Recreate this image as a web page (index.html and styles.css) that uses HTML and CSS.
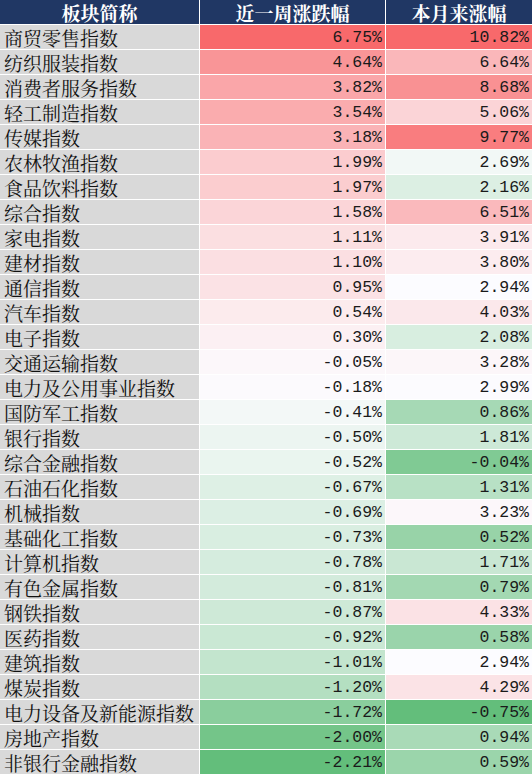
FILE: index.html
```html
<!DOCTYPE html>
<html lang="zh-CN">
<head>
  <meta charset="UTF-8" />
  <meta name="viewport" content="width=device-width, initial-scale=1.0"/>
  <title>板块涨跌幅</title>
  <link rel="stylesheet" href="styles.css">
</head>
<body>

  <div class="sheet">
    <div class="cell head">板块简称</div>
    <div class="cell head">近一周涨跌幅</div>
    <div class="cell head">本月来涨幅</div>

    <div class="cell name">商贸零售指数</div><div class="cell num week">6.75%</div><div class="cell num month">10.82%</div>
    <div class="cell name">纺织服装指数</div><div class="cell num week">4.64%</div><div class="cell num month">6.64%</div>
    <div class="cell name">消费者服务指数</div><div class="cell num week">3.82%</div><div class="cell num month">8.68%</div>
    <div class="cell name">轻工制造指数</div><div class="cell num week">3.54%</div><div class="cell num month">5.06%</div>
    <div class="cell name">传媒指数</div><div class="cell num week">3.18%</div><div class="cell num month">9.77%</div>
    <div class="cell name">农林牧渔指数</div><div class="cell num week">1.99%</div><div class="cell num month">2.69%</div>
    <div class="cell name">食品饮料指数</div><div class="cell num week">1.97%</div><div class="cell num month">2.16%</div>
    <div class="cell name">综合指数</div><div class="cell num week">1.58%</div><div class="cell num month">6.51%</div>
    <div class="cell name">家电指数</div><div class="cell num week">1.11%</div><div class="cell num month">3.91%</div>
    <div class="cell name">建材指数</div><div class="cell num week">1.10%</div><div class="cell num month">3.80%</div>
    <div class="cell name">通信指数</div><div class="cell num week">0.95%</div><div class="cell num month">2.94%</div>
    <div class="cell name">汽车指数</div><div class="cell num week">0.54%</div><div class="cell num month">4.03%</div>
    <div class="cell name">电子指数</div><div class="cell num week">0.30%</div><div class="cell num month">2.08%</div>
    <div class="cell name">交通运输指数</div><div class="cell num week">-0.05%</div><div class="cell num month">3.28%</div>
    <div class="cell name">电力及公用事业指数</div><div class="cell num week">-0.18%</div><div class="cell num month">2.99%</div>
    <div class="cell name">国防军工指数</div><div class="cell num week">-0.41%</div><div class="cell num month">0.86%</div>
    <div class="cell name">银行指数</div><div class="cell num week">-0.50%</div><div class="cell num month">1.81%</div>
    <div class="cell name">综合金融指数</div><div class="cell num week">-0.52%</div><div class="cell num month">-0.04%</div>
    <div class="cell name">石油石化指数</div><div class="cell num week">-0.67%</div><div class="cell num month">1.31%</div>
    <div class="cell name">机械指数</div><div class="cell num week">-0.69%</div><div class="cell num month">3.23%</div>
    <div class="cell name">基础化工指数</div><div class="cell num week">-0.73%</div><div class="cell num month">0.52%</div>
    <div class="cell name">计算机指数</div><div class="cell num week">-0.78%</div><div class="cell num month">1.71%</div>
    <div class="cell name">有色金属指数</div><div class="cell num week">-0.81%</div><div class="cell num month">0.79%</div>
    <div class="cell name">钢铁指数</div><div class="cell num week">-0.87%</div><div class="cell num month">4.33%</div>
    <div class="cell name">医药指数</div><div class="cell num week">-0.92%</div><div class="cell num month">0.58%</div>
    <div class="cell name">建筑指数</div><div class="cell num week">-1.01%</div><div class="cell num month">2.94%</div>
    <div class="cell name">煤炭指数</div><div class="cell num week">-1.20%</div><div class="cell num month">4.29%</div>
    <div class="cell name">电力设备及新能源指数</div><div class="cell num week">-1.72%</div><div class="cell num month">-0.75%</div>
    <div class="cell name">房地产指数</div><div class="cell num week">-2.00%</div><div class="cell num month">0.94%</div>
    <div class="cell name">非银行金融指数</div><div class="cell num week">-2.21%</div><div class="cell num month">0.59%</div>
  </div>

  <script src="script.js"></script>

</body>
</html>
```

FILE: styles.css
```css
body {
  margin: 0;
  background: #ffffff;
  color: #111111;
  font-family: "Noto Serif CJK SC", "Noto Sans CJK SC", sans-serif;
}

.sheet {
  display: grid;
  grid-template-columns: 199px 185px 1fr;
  grid-auto-rows: 24px;
  gap: 1px;
  width: 532px;
  background: #ffffff;
}

.cell {
  display: flex;
  align-items: center;
  white-space: nowrap;
  overflow: hidden;
}

.head {
  justify-content: center;
  background: #203764;
  color: #ffffff;
  font-size: 19px;
  font-weight: bold;
}

.name {
  background: #d9d9d9;
  padding-left: 4px;
  font-size: 19px;
}

.num {
  justify-content: flex-end;
  padding-right: 3px;
  font-family: "Liberation Mono", monospace;
  font-size: 16.5px;
  color: #1a1a1a;
  background: #fcfcff;
}
```

FILE: script.js
```js
// Excel-style 3 colour scale: green (min) - white (50th percentile) - red (max)
const low = [99, 190, 123];
const middle = [252, 252, 255];
const high = [248, 105, 107];

function mix(a, b, t) {
  return a.map((v, i) => Math.round(v + (b[i] - v) * t));
}

function paint(selector) {
  const cells = Array.from(document.querySelectorAll(selector));
  const values = cells.map(c => parseFloat(c.textContent));
  const sorted = [...values].sort((a, b) => a - b);
  const min = sorted[0];
  const max = sorted[sorted.length - 1];
  const pos = (sorted.length - 1) / 2;
  const mid = (sorted[Math.floor(pos)] + sorted[Math.ceil(pos)]) / 2;

  cells.forEach((cell, i) => {
    const v = values[i];
    let rgb;
    if (v >= mid) {
      rgb = mix(middle, high, (v - mid) / (max - mid));
    } else {
      rgb = mix(middle, low, (mid - v) / (mid - min));
    }
    cell.style.background = "rgb(" + rgb.join(",") + ")";
  });
}

paint(".week");
paint(".month");
```
